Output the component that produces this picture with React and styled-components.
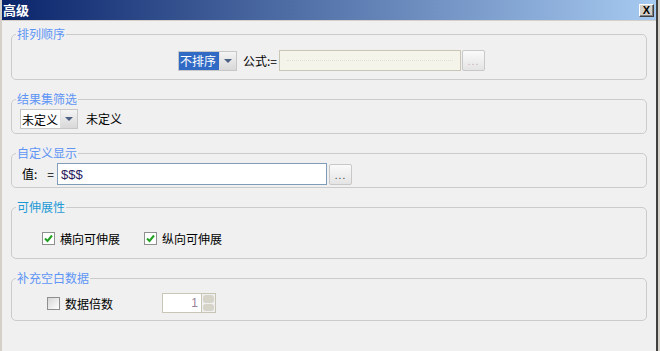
import React from 'react'
import styled, { createGlobalStyle } from 'styled-components'

const GlobalStyle = createGlobalStyle`
  html, body {
    margin: 0;
    padding: 0;
    background: #f0f0f0;
  }
  body {
    font-family: "Noto Sans CJK SC", "Liberation Sans", sans-serif;
    font-size: 12px;
  }
`

const Window = styled.div`
  width: 660px;
  height: 351px;
  box-sizing: border-box;
  background: #f0f0f0;
  border-left: 2px solid #d4d0c8;
  border-right: 2px solid #d4d0c8;
  display: flex;
  flex-direction: column;
  overflow: hidden;
`

const Inner = styled.div`
  flex: 1;
  display: flex;
  flex-direction: column;
  border-right: 2px solid #404040;
  border-left: 1px solid #a0a0a0;
  margin-left: -1px;
`

const TitleBar = styled.div`
  height: 20px;
  display: flex;
  align-items: center;
  justify-content: space-between;
  padding: 0 0 0 2px;
  margin-left: -1px;
  background: linear-gradient(to right, #0a246a, #a6caf0);
  border-bottom: 1px solid #d4d0c8;
`

const Title = styled.span`
  color: #fff;
  font-weight: bold;
  font-size: 13px;
  line-height: 20px;
`

const CloseButton = styled.div`
  width: 15px;
  height: 13px;
  margin-right: 2px;
  box-sizing: border-box;
  background: #d4d0c8;
  border: 1px solid;
  border-color: #fff #404040 #404040 #fff;
  box-shadow: inset -1px -1px 0 #808080;
  display: flex;
  align-items: center;
  justify-content: center;
  font-family: "Liberation Sans", sans-serif;
  font-weight: bold;
  font-size: 11px;
  line-height: 1;
  color: #000;
`

const Body = styled.div`
  flex: 1;
  display: flex;
  flex-direction: column;
  gap: 12px;
  padding: 6px 9px 0 9px;
`

const Group = styled.fieldset`
  margin: 0;
  box-sizing: border-box;
  height: ${p => p.$h}px;
  border: 1px solid #cbcbcb;
  border-radius: 5px;
  padding: ${p => p.$pt}px 0 0 0;
  min-width: 0;
`

const Legend = styled.legend`
  padding: 0 1px;
  margin-left: 4px;
  font-size: 12px;
  line-height: 14px;
  color: ${p => p.$color || '#5e95f5'};
`

const Row = styled.div`
  display: flex;
  align-items: center;
  justify-content: ${p => p.$center ? 'center' : 'flex-start'};
  gap: ${p => p.$gap || 0}px;
  padding-left: ${p => p.$pl || 0}px;
`

const Text = styled.span`
  color: #000;
  font-size: 12px;
  line-height: 14px;
  white-space: nowrap;
  margin: ${p => p.$m || '0'};
`

const FieldLabel = styled.span`
  width: 35px;
  display: flex;
  justify-content: space-between;
  padding-right: 3px;
  box-sizing: border-box;
  color: #000;
  font-size: 12px;
  line-height: 14px;
`

const Select = styled.div`
  display: flex;
  height: 20px;
  width: ${p => p.$w}px;
  box-sizing: border-box;
  border: 1px solid #c7c7c7;
  background: #fff;
`

const SelectValue = styled.div`
  flex: 1;
  display: flex;
  align-items: center;
  padding-left: 1px;
  background: ${p => p.$selected ? '#316ac5' : '#fff'};
  color: ${p => p.$selected ? '#fff' : '#000'};
  font-size: 12px;
  white-space: nowrap;
`

const SelectArrow = styled.div`
  width: 16px;
  display: flex;
  align-items: center;
  justify-content: center;
  background: linear-gradient(#f4f4f4, #d8d8d8);
  border-left: 1px solid #e0e0e0;
`

const Arrow = styled.div`
  width: 0;
  height: 0;
  border-left: 4px solid transparent;
  border-right: 4px solid transparent;
  border-top: 4px solid #4d6185;
`

const Input = styled.div`
  width: ${p => p.$w}px;
  height: ${p => p.$h || 21}px;
  box-sizing: border-box;
  border: 1px solid ${p => p.$border || '#cac6b6'};
  background: ${p => p.$bg || '#f5f4ea'};
  display: flex;
  align-items: center;
  justify-content: ${p => p.$right ? 'flex-end' : 'flex-start'};
  padding: 0 3px;
  font-family: "Liberation Sans", sans-serif;
  font-size: ${p => p.$fs || 12}px;
  color: ${p => p.$color || '#000'};
`

const Dotted = styled.div`
  flex: 1;
  height: 0;
  margin: 0 4px;
  border-top: 1px dotted #e2e0d2;
`

const EllipsisButton = styled.div`
  width: 23px;
  height: 21px;
  margin-left: ${p => p.$ml || 1}px;
  box-sizing: border-box;
  border: 1px solid #c8c8c8;
  border-radius: 2px;
  background: linear-gradient(#fafafa, #e4e4e4);
  display: flex;
  align-items: flex-end;
  justify-content: center;
  padding-bottom: 4px;
  font-family: "Liberation Sans", sans-serif;
  font-size: 10px;
  line-height: 8px;
  letter-spacing: 1px;
  color: ${p => p.$disabled ? '#c9a8b0' : '#333'};
`

const CheckLabel = styled.label`
  display: flex;
  align-items: center;
  gap: 5px;
  font-size: 12px;
  color: #000;
`

const Box = styled.span`
  width: 13px;
  height: 13px;
  box-sizing: border-box;
  border: 1px solid #8e8f8f;
  background: ${p => p.$checked ? '#fff' : 'linear-gradient(135deg, #d6d6d6, #ffffff)'};
  display: flex;
  align-items: center;
  justify-content: center;
`

const Spin = styled.div`
  display: flex;
  margin-left: 49px;
`

const SpinButtons = styled.div`
  width: 14px;
  height: 20px;
  display: flex;
  flex-direction: column;
  gap: 1px;
  border: 1px solid #c8c4b4;
  border-left: none;
  box-sizing: border-box;
  padding: 1px;
  background: #f0f0f0;
`

const SpinHalf = styled.div`
  flex: 1;
  background: #d6d3c9;
  border-radius: 3px;
`

const Check = ({ checked, children }) => (
  <CheckLabel>
    <Box $checked={checked}>
      {checked && (
        <svg width="9" height="9" viewBox="0 0 9 9">
          <path d="M1 4.5 L3.5 7 L8 1.5" fill="none" stroke="#21a121" strokeWidth="2" />
        </svg>
      )}
    </Box>
    {children}
  </CheckLabel>
)

export default function App() {
  return (
    <>
      <GlobalStyle />
      <Window>
        <Inner>
          <TitleBar>
            <Title>高级</Title>
            <CloseButton>X</CloseButton>
          </TitleBar>
          <Body>
            <Group $h={53} $pt={9}>
              <Legend>排列顺序</Legend>
              <Row $center $pl={5}>
                <Select $w={59}>
                  <SelectValue $selected>不排序</SelectValue>
                  <SelectArrow><Arrow /></SelectArrow>
                </Select>
                <Text $m="0 2px 0 6px">公式:=</Text>
                <Input $w={182}><Dotted /></Input>
                <EllipsisButton $disabled>...</EllipsisButton>
              </Row>
            </Group>

            <Group $h={42} $pt={3}>
              <Legend>结果集筛选</Legend>
              <Row $pl={8}>
                <Select $w={58}>
                  <SelectValue>未定义</SelectValue>
                  <SelectArrow><Arrow /></SelectArrow>
                </Select>
                <Text $m="0 0 0 8px">未定义</Text>
              </Row>
            </Group>

            <Group $h={42} $pt={3}>
              <Legend>自定义显示</Legend>
              <Row $pl={10}>
                <FieldLabel><span>值:</span><span>=</span></FieldLabel>
                <Input $w={270} $h={22} $bg="#fff" $border="#7f9db9" $color="#2a1a5e" $fs={13}>$$$</Input>
                <EllipsisButton $ml={2}>...</EllipsisButton>
              </Row>
            </Group>

            <Group $h={59} $pt={16}>
              <Legend $color="#1c9ad6">可伸展性</Legend>
              <Row $pl={30} $gap={24}>
                <Check checked>横向可伸展</Check>
                <Check checked>纵向可伸展</Check>
              </Row>
            </Group>

            <Group $h={50} $pt={8}>
              <Legend>补充空白数据</Legend>
              <Row $pl={35}>
                <Check>数据倍数</Check>
                <Spin>
                  <Input $w={40} $h={20} $bg="#fff" $right $color="#9a7f9a">1</Input>
                  <SpinButtons>
                    <SpinHalf />
                    <SpinHalf />
                  </SpinButtons>
                </Spin>
              </Row>
            </Group>
          </Body>
        </Inner>
      </Window>
    </>
  )
}
